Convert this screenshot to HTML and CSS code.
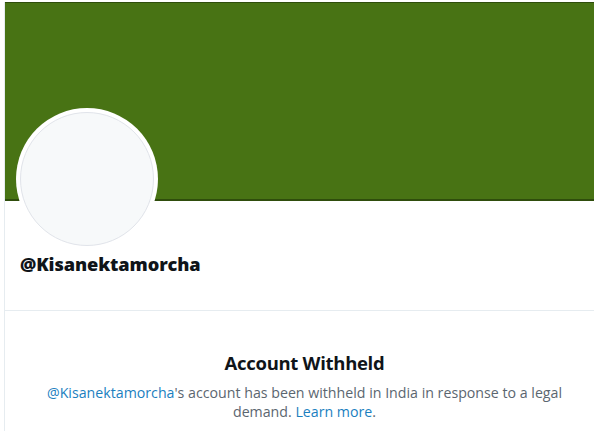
FILE: index.html
```html
<!DOCTYPE html>
<html>
    <head>
        <meta charset="UTF-8">
        <title>@Kisanektamorcha</title>
        <link rel="stylesheet" href="styles.css">
    </head>

    <body>
        <div class="profile">
            <div class="banner"></div>
            <div class="avatar">
                <div class="avatar_inner"></div>
            </div>
            <h2 class="username">@Kisanektamorcha</h2>
            <div class="withheld">
                <h3>Account Withheld</h3>
                <p><a href="#">@Kisanektamorcha</a>'s account has been withheld in India in response to a legal demand. <a href="#">Learn more</a>.</p>
            </div>
        </div>
    </body>
</html>
```

FILE: styles.css
```css
body {
    margin: 0;
    padding-top: 2px;
    background: #ffffff;
    font-family: 'Open Sans', sans-serif;
}
.profile {
    margin-left: 4px;
    border-left: 1px solid #e6ecf0;
    height: 429px;
}
.banner {
    height: 196px;
    background: #487314;
    border-top: 1px solid #2f4d0c;
    border-bottom: 2px solid #2f4d0c;
}
.avatar {
    width: 134px;
    height: 134px;
    margin: -93px 0 0 11px;
    padding: 4px;
    border-radius: 50%;
    background: #ffffff;
    position: relative;
}
.avatar_inner {
    width: 132px;
    height: 132px;
    border: 1px solid #e1e4ea;
    border-radius: 50%;
    background: #f7f9fa;
}
.username {
    margin: 2px 0 0 0;
    padding-left: 15px;
    height: 58px;
    font-size: 18.2px;
    line-height: 24px;
    font-weight: 800;
    letter-spacing: -0.1px;
    color: #0f1419;
    border-bottom: 1px solid #e6ecf0;
}
.withheld {
    padding: 39px 0 0 10px;
    text-align: center;
}
.withheld h3 {
    margin: 0 0 7px 0;
    font-size: 18.5px;
    line-height: 26px;
    font-weight: bold;
    letter-spacing: -0.3px;
    color: #0f1419;
}
.withheld p {
    max-width: 540px;
    margin: 0 auto;
    font-size: 14.2px;
    line-height: 19px;
    color: #5b6670;
}
.withheld a {
    color: #1b7fbf;
    text-decoration: none;
}
```
